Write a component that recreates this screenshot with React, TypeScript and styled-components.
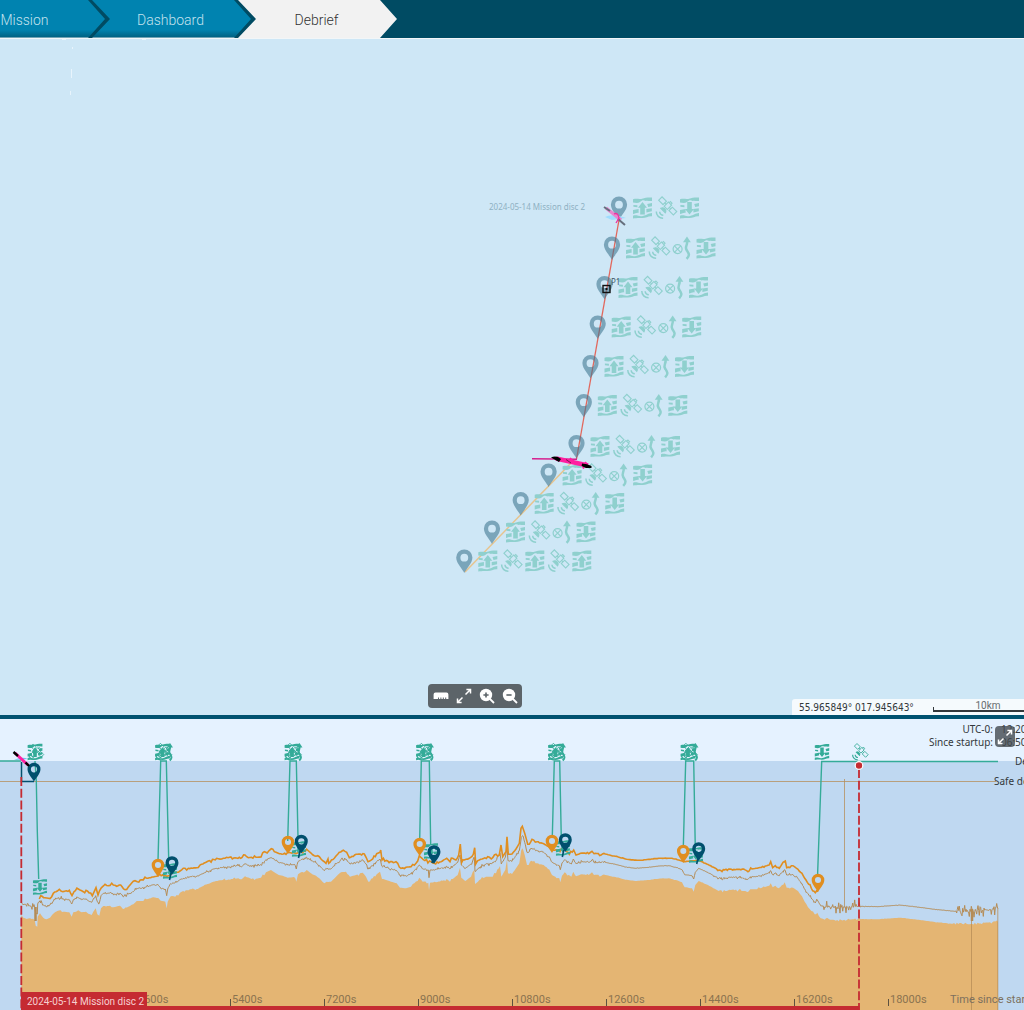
import React from "react";
import styled, { createGlobalStyle } from "styled-components";

const color = {
  navy: "#004b63",
  blue: "#0083b0",
  map: "#cee7f6",
  sky: "#e5f2ff",
  water: "#bfd8f1",
  sand: "#e4b573",
  sandLine: "#b58c56",
  orange: "#e08e20",
  green: "#34ab98",
  mint: "#8fd0ce",
  red: "#c52b32",
  magenta: "#ff1fa0",
};

const uiFont = `Roboto, "Liberation Sans", sans-serif`;
const dataFont = `"Noto Sans", "DejaVu Sans", sans-serif`;

const GlobalStyle = createGlobalStyle`
  *, *::before, *::after { box-sizing: border-box; }
  body { margin: 0; background: ${color.water}; font-family: ${uiFont}; }
`;

const Page = styled.div`
  display: flex;
  flex-direction: column;
  min-height: 100vh;
  overflow: hidden;
`;

const Header = styled.header`
  background: ${color.navy};
  border-bottom: 1px solid #f2f6f8;
`;

const Tabs = styled.nav`
  display: flex;
  height: 38px;
  margin-left: -54px;
`;

const Tab = styled.a<{ $active?: boolean }>`
  flex: none;
  display: flex;
  align-items: center;
  justify-content: center;
  width: 159px;
  margin-right: -13px;
  padding: 2px 2px 0 0;
  font-size: 14px;
  font-weight: 300;
  text-decoration: none;
  color: ${(p) => (p.$active ? "#333" : "#c3e2ee")};
  background: ${(p) =>
    p.$active ? "#f2f2f2" : `linear-gradient(${color.blue} 78%, #006384 97%, #6fa3b5 98%)`};
  clip-path: polygon(0 0, calc(100% - 17px) 0, 100% 50%, calc(100% - 17px) 100%, 0 100%, 18px 50%);
`;

const MapPane = styled.main`
  position: relative;
  background: ${color.map};
  border-bottom: 4px solid #005270;
`;

const Canvas = styled.svg<{ $height: number }>`
  display: block;
  width: 100%;
  height: ${(p) => p.$height}px;
`;

const CanvasText = styled.text<{ $size: number; $data?: boolean }>`
  font-family: ${(p) => (p.$data ? dataFont : uiFont)};
  font-size: ${(p) => p.$size}px;
`;

const Toolbar = styled.div`
  position: absolute;
  bottom: 7px;
  left: calc(50% - 84px);
  display: flex;
  height: 24px;
  padding: 0 1px;
  border-radius: 4px;
  background: #5c6469;
`;

const ToolButton = styled.button`
  display: grid;
  place-items: center;
  width: 23px;
  height: 24px;
  padding: 0;
  border: 0;
  background: none;
  color: #fff;
`;

const PositionBar = styled.div`
  position: absolute;
  right: 0;
  bottom: 0;
  display: flex;
  gap: 15px;
  width: 232px;
  height: 16px;
  padding-left: 7px;
  overflow: hidden;
  border-radius: 3px 0 0 0;
  background: #f5fafd;
  color: #33383b;
  font: 11px/17px ${dataFont};
  white-space: nowrap;
`;

const Coordinates = styled.span`
  flex: none;
  width: 119px;
  font: 10px/17px "DejaVu Sans Condensed", "DejaVu Sans", sans-serif;
`;

const Scale = styled.span`
  flex: none;
  position: relative;
  width: 110px;
  height: 13px;
  border-bottom: 2px solid #33383b;
  color: #666c70;
  font: 10px/14px ${uiFont};
  text-align: center;

  &::before {
    content: "";
    position: absolute;
    left: 0;
    bottom: 0;
    width: 1px;
    height: 3px;
    background: #33383b;
  }
`;

const ProfilePane = styled.section`
  position: relative;
  flex: 1;
  overflow: hidden;
  background: ${color.water};
`;

const Readout = styled.dl`
  position: absolute;
  top: 4px;
  left: calc(100% - 111px);
  display: grid;
  grid-template-columns: 80px 40px;
  column-gap: 8px;
  margin: 0;
  color: #33383b;
  font: 10px/13px ${dataFont};
  white-space: nowrap;
`;

const Term = styled.dt`
  text-align: right;
`;

const Value = styled.dd`
  margin: 0;
`;

const LineLabel = styled.span<{ $top: number; $width: number }>`
  position: absolute;
  top: ${(p) => p.$top}px;
  left: calc(100% - ${(p) => p.$width}px);
  color: #33383b;
  font: 10px/14px ${dataFont};
  white-space: nowrap;
`;

const ExpandButton = styled.button`
  position: absolute;
  top: 7px;
  right: 9px;
  display: grid;
  place-items: center;
  width: 20px;
  height: 21px;
  padding: 0;
  border: 0;
  border-radius: 4px;
  background: rgba(64, 70, 76, 0.78);
  color: #fff;
`;

/* ---------- glyphs ---------- */

type GlyphName = "up" | "down" | "sat" | "drift";

const Disc = ({ down }: { down?: boolean }) => (
  <g fill="currentColor">
    <path d="M0 1.8C4 .6 6 2.2 10 1S16 .2 19 0V3.4C16 3.8 14.4 2.8 12.6 3.4 10.4 2.4 9 2.6 7 4.6 5 6 2 5.4 0 5Z" />
    <path d="M.4 7.4 4.4 7.8V9.8L.4 9.2Z M0 12.6 5.6 11.6V15.4C4 14.8 2 16.4 0 16.4Z" />
    <path d="M14.2 6.4 19 5.4V8.8L15.2 9.4Z M13.4 11.6 18.8 10.8V13.8L13.4 15Z" />
    <path d="M0 18.2C4 17 6 19.4 10 18.4S15 15.8 19 15.4V18.8C15 18.4 13 20.8 9 20.6S3 20.6 0 21Z" />
    <path
      d={
        down
          ? "M9.5 17 14 11.4H11.8V4.6H7.2V11.4H5Z"
          : "M9.5 4.6 14 10.2H11.8V17H7.2V10.2H5Z"
      }
    />
  </g>
);

const Satellite = () => (
  <g fill="none" stroke="currentColor" strokeWidth="1.1">
    <g transform="translate(11.2 8.4) rotate(45)">
      <rect x="-10.4" y="-2.4" width="6.2" height="4.8" />
      <rect x="4.2" y="-2.4" width="6.2" height="4.8" />
      <rect x="-2.2" y="-3.2" width="4.4" height="6" />
      <path d="M-4.2 0H-2.2M2.2 0H4.2M-1.2-3.2V-5H1.2V-3.2" />
      <path d="M-3.2 6.6A3.3 3.3 0 0 1 3.2 6.6Z" fill="currentColor" />
    </g>
    <path d="M3.2 14.2A3.6 3.6 0 0 0 6.8 17.8M-.2 14A6.6 6.6 0 0 0 6.6 20.8" strokeWidth="1.5" />
  </g>
);

const Drift = () => (
  <g fill="none" stroke="currentColor" strokeWidth="1.2">
    <circle cx="4.6" cy="11.6" r="4.5" />
    <path d="M1.4 8.4 7.8 14.8M7.8 8.4 1.4 14.8" />
    <path d="M14 3C15 8 11.4 9 13.6 12.5S17.4 17.5 13.6 21.4" strokeWidth="2.5" />
    <path d="M14-1 17.8 4.8H10Z" fill="currentColor" stroke="none" />
  </g>
);

const Glyph = ({ name, x, y, scale = 1 }: { name: GlyphName; x: number; y: number; scale?: number }) => (
  <g transform={`translate(${x} ${y}) scale(${scale}) translate(-9.5 -10.5)`}>
    {name === "sat" ? <Satellite /> : name === "drift" ? <Drift /> : <Disc down={name === "down"} />}
  </g>
);

/* Pin whose tip is at (x, y) */
const Pin = ({ x, y, fill, scale = 1 }: { x: number; y: number; fill: string; scale?: number }) => (
  <path
    transform={`translate(${x} ${y}) scale(${scale})`}
    fill={fill}
    fillRule="evenodd"
    d="M0 0C-1.4-3.4-8.1-9.6-8.1-15.4A8.1 8.1 0 0 1 8.1-15.4C8.1-9.6 1.4-3.4 0 0ZM0-11.4A3.9 3.9 0 1 0 0-19.2 3.9 3.9 0 0 0 0-11.4Z"
  />
);

const RulerIcon = () => (
  <svg width="16" height="10" viewBox="0 0 16 10" fill="currentColor">
    <path d="M2.5 1.5H13.5A2 2 0 0 1 15.4 3.5V8H13.2V6.4H12.2V8H10.8V6.4H9.8V8H8.4V6.4H7.4V8H6V6.4H5V8H.6V3.5A2 2 0 0 1 2.5 1.5Z" />
  </svg>
);

const ExpandIcon = () => (
  <svg width="16" height="16" viewBox="0 0 16 16" fill="none" stroke="currentColor" strokeWidth="1.5">
    <path d="M10.4 1.5H14.5V5.6M14.5 1.5 9.5 6.5M5.6 14.5H1.5V10.4M1.5 14.5 6.5 9.5" />
  </svg>
);

const ZoomIcon = ({ plus }: { plus?: boolean }) => (
  <svg width="16" height="16" viewBox="0 0 16 16">
    <circle cx="7" cy="7" r="6.2" fill="currentColor" />
    <path d="M11 11 15 15" stroke="currentColor" strokeWidth="1.8" />
    <path d={plus ? "M4.4 7H9.6M7 4.4V9.6" : "M4.4 7H9.6"} stroke="#5c6469" strokeWidth="1.6" />
  </svg>
);

/* ---------- map ---------- */

const fullStop: GlyphName[] = ["up", "sat", "drift", "down"];

const waypoints: { x: number; y: number; glyphs: GlyphName[] }[] = [
  { x: 619, y: 220, glyphs: ["up", "sat", "down"] },
  { x: 612, y: 260, glyphs: fullStop },
  { x: 604.5, y: 299.5, glyphs: fullStop },
  { x: 597.7, y: 339, glyphs: fullStop },
  { x: 590.5, y: 378.5, glyphs: fullStop },
  { x: 583.8, y: 417.5, glyphs: fullStop },
  { x: 576.5, y: 458.5, glyphs: fullStop },
  { x: 548.6, y: 487, glyphs: fullStop },
  { x: 520.7, y: 515.5, glyphs: fullStop },
  { x: 492, y: 544, glyphs: fullStop },
  { x: 464.3, y: 573, glyphs: ["up", "sat", "up", "sat", "up"] },
];

const MapDrawing = () => (
  <Canvas $height={676} role="img" aria-label="Mission track">
    <g transform="translate(0 -39)">
      <g fill="#e8f4fc">
        <path d="M62 39H66V40H62ZM142 39H146V40H142ZM72 47H73V49H72ZM71 69H72V78H71ZM70 91H71V95H70Z" />
      </g>
      <path d="M572 462 465 572" stroke="#e6c48e" strokeWidth="1.5" fill="none" />
      <path d="M619 220 576.5 459" stroke="#e2675c" strokeWidth="1.3" fill="none" />
      {waypoints.map((p) => (
        <g key={p.y} color={color.mint}>
          <Pin x={p.x} y={p.y} fill="rgba(62, 118, 143, 0.58)" />
          {p.glyphs.map((g, i) => (
            <Glyph key={i} name={g} x={p.x + 23.5 + i * 23.5} y={p.y - 12} />
          ))}
        </g>
      ))}
      <CanvasText $size={8} $data x={489} y={210} fill="#8fb1c3">
        2024-05-14 Mission disc 2
      </CanvasText>
      <g>
        <path d="M605 217Q612 213 626 218L612 220Z" fill="#9fdcff" />
        <path d="M606 208 621 220" stroke="#e987cf" strokeWidth="3.4" />
        <path d="M604 207 610 211M618 219 625 225" stroke="#666f7d" strokeWidth="2" />
        <path d="M614 214Q618 212 619 218L616 223" fill="none" stroke="#f0309f" strokeWidth="1.3" />
      </g>
      <rect x="603" y="285.5" width="7" height="7" fill="none" stroke="#111" strokeWidth="1.4" />
      <rect x="605.5" y="288" width="2" height="2" fill="#111" />
      <CanvasText $size={8} $data x={611} y={285} fill="#3f5663">
        P1
      </CanvasText>
      <path d="M532 458.7 577 459.3" stroke="#d6218f" strokeWidth="1.5" />
      <path d="M556 458.5 588 465.5" stroke={color.magenta} strokeWidth="4.6" />
      <path d="M586 462 583 468.5M570 458 574 463" stroke={color.magenta} strokeWidth="2" />
      <path d="M551 457.6Q556 455 561 459L559 462ZM582 463.4 587 464.2 591.5 466V468L586 468 581.6 466Z" fill="#000" />
      <path d="M566 459.5 571 463" stroke="#7a1a55" strokeWidth="1" />
    </g>
  </Canvas>
);

/* ---------- depth profile ---------- */

type Sample = [number, number];

/* Samples are stored at three per pixel */
const RES = 3;
const TOP = 16;

const seabed: Sample[] = [
  [64, 540], [70, 548], [80, 552], [90, 550], [104, 556], [107, 572], [112, 575], [113, 545], [120, 535],
  [130, 548], [140, 553], [150, 548], [158, 538], [165, 532], [172, 528], [182, 526], [190, 530], [208, 532],
  [215, 545], [220, 532], [228, 530], [235, 526], [245, 532], [258, 530], [265, 536], [275, 540], [280, 530],
  [287, 520], [292, 538], [298, 542], [303, 520], [310, 513], [330, 512], [345, 516], [360, 512], [372, 522],
  [385, 515], [400, 508], [410, 498], [425, 498], [440, 493], [460, 487], [475, 489], [482, 497], [496, 500],
  [500, 520], [503, 500], [512, 484], [530, 480], [545, 470], [570, 463], [590, 462], [610, 453], [640, 440],
  [660, 436], [690, 434], [715, 430], [725, 433], [735, 424], [750, 430], [768, 431], [783, 428], [798, 412],
  [813, 405], [823, 412], [836, 420], [848, 422], [863, 428], [878, 427], [886, 430], [889, 440], [894, 418],
  [903, 412], [920, 405], [933, 415], [948, 422], [958, 430], [973, 445], [980, 440], [993, 440], [1008, 425],
  [1023, 412], [1038, 410], [1050, 425], [1068, 420], [1088, 413], [1098, 425], [1105, 440], [1118, 430],
  [1130, 418], [1140, 410], [1146, 432], [1158, 435], [1173, 440], [1190, 445], [1200, 458], [1218, 460],
  [1233, 455], [1243, 445], [1258, 428], [1268, 440], [1285, 443], [1287, 466], [1290, 443], [1308, 442],
  [1328, 437], [1340, 432], [1350, 440], [1358, 432], [1373, 420], [1380, 398], [1384, 428], [1396, 438],
  [1413, 425], [1423, 405], [1425, 447], [1438, 435], [1458, 425], [1473, 425], [1488, 415], [1500, 393],
  [1504, 425], [1516, 405], [1521, 373], [1524, 415], [1536, 417], [1548, 400], [1558, 385], [1564, 345],
  [1568, 340], [1574, 360], [1581, 390], [1586, 390], [1594, 377], [1611, 385], [1631, 390], [1644, 402],
  [1656, 420], [1666, 425], [1678, 430], [1681, 442], [1686, 422], [1694, 412], [1706, 420], [1714, 425],
  [1720, 410], [1728, 424], [1746, 418], [1766, 420], [1776, 412], [1782, 420], [1816, 420], [1846, 426],
  [1876, 434], [1906, 438], [1946, 435], [1976, 431], [2006, 430], [2031, 436], [2046, 442], [2054, 457],
  [2076, 460], [2081, 470], [2086, 450], [2096, 438], [2116, 447], [2136, 457], [2156, 468], [2176, 468],
  [2196, 464], [2216, 465], [2244, 471], [2251, 463], [2271, 463], [2286, 458], [2304, 453], [2312, 445],
  [2318, 457], [2326, 452], [2336, 460], [2346, 450], [2354, 442], [2360, 458], [2379, 458], [2394, 468],
  [2414, 500], [2429, 522], [2444, 538], [2452, 533], [2462, 550], [2474, 554], [2524, 555], [2574, 552],
  [2634, 553], [2699, 548], [2744, 553], [2804, 561], [2854, 566], [2904, 568], [2954, 563], [2994, 560],
];

const safeDepth: Sample[] = [
  [118, 492], [122, 482], [135, 488], [145, 490], [155, 485], [160, 475], [172, 468], [178, 463], [188, 470],
  [208, 466], [216, 482], [222, 470], [235, 462], [250, 470], [258, 466], [272, 474], [277, 482], [288, 458],
  [294, 480], [303, 460], [315, 448], [325, 452], [335, 445], [350, 454], [362, 450], [375, 464], [390, 450],
  [405, 437], [412, 440], [425, 434], [440, 430], [460, 426], [475, 422], [505, 422], [520, 412], [535, 412],
  [550, 400], [565, 400], [590, 398], [600, 390], [625, 378], [650, 370], [665, 372], [680, 367], [722, 370],
  [735, 360], [745, 368], [768, 367], [783, 366], [793, 350], [806, 348], [814, 341], [823, 350], [838, 356],
  [858, 358], [863, 352], [888, 356], [920, 343], [928, 350], [943, 362], [953, 362], [963, 372], [978, 385],
  [984, 372], [986, 385], [1003, 370], [1018, 352], [1030, 346], [1040, 352], [1048, 368], [1068, 358],
  [1093, 357], [1104, 380], [1118, 372], [1130, 356], [1140, 352], [1142, 345], [1146, 375], [1163, 378],
  [1180, 383], [1188, 380], [1203, 400], [1218, 397], [1233, 395], [1248, 385], [1258, 362], [1270, 374],
  [1293, 380], [1303, 385], [1323, 380], [1340, 370], [1350, 380], [1358, 370], [1368, 375], [1376, 360],
  [1381, 327], [1385, 382], [1393, 375], [1408, 370], [1420, 358], [1424, 338], [1427, 387], [1438, 375],
  [1463, 365], [1474, 372], [1488, 358], [1498, 360], [1503, 330], [1508, 365], [1518, 350], [1521, 305],
  [1525, 358], [1536, 357], [1548, 342], [1558, 325], [1563, 280], [1567, 274], [1574, 295], [1583, 328],
  [1588, 328], [1596, 313], [1611, 320], [1631, 326], [1646, 335], [1656, 345], [1696, 345], [1708, 358],
  [1721, 345], [1728, 360], [1746, 354], [1766, 356], [1776, 349], [1782, 356], [1816, 357], [1846, 364],
  [1881, 373], [1916, 376], [1946, 373], [1976, 370], [2016, 370], [2036, 375], [2051, 380], [2096, 376],
  [2116, 385], [2136, 395], [2158, 405], [2186, 402], [2206, 404], [2231, 402], [2244, 410], [2256, 402],
  [2276, 398], [2304, 391], [2312, 380], [2318, 398], [2326, 392], [2338, 400], [2349, 382], [2356, 378],
  [2360, 398], [2379, 392], [2394, 403], [2414, 430], [2434, 460], [2446, 473], [2454, 470],
];

const noise = (n: number) => {
  const v = Math.sin(n * 12.9898) * 43758.5453;
  return (v - Math.floor(v)) * 2 - 1;
};

const ripple = (data: Sample[], amount: (x: number) => number, step = 4): Sample[] =>
  data.flatMap(([x, y], i) => {
    const next = data[i + 1];
    if (!next) return [[x, y] as Sample];
    const steps = Math.max(1, Math.floor((next[0] - x) / step));
    return Array.from({ length: steps }, (_, s): Sample => {
      const t = s / steps;
      const px = x + (next[0] - x) * t;
      const jitter = s ? noise(px) ** 3 * amount(px) : 0;
      return [px, y + (next[1] - y) * t + jitter];
    });
  });

const toPath = (data: Sample[], lift = 0) =>
  "M" + data.map(([x, y]) => `${(x / RES).toFixed(1)} ${((y - lift) / RES + TOP).toFixed(1)}`).join("L");

const calm = (x: number) => (x > 1816 && x < 2140) || (x > 2580 && x < 2860);
const bedPath = toPath(ripple(seabed, (x) => (calm(x) ? 1 : 5)));
const safePath = toPath(ripple(safeDepth, (x) => (calm(x) ? 1 : 6)));
const echoPath = toPath(
  ripple(
    seabed,
    (x) => {
      if ((x > 2460 && x < 2580) || x > 2866) return 20;
      if (x < 104) return 14;
      return calm(x) ? 1 : 5;
    },
    2
  ),
  38
);

const gliderPath =
  "M0 42H21M35 42 36.3 62 37.3 112 38.7 160M158 142 160.7 42H166.3L168.7 140" +
  "M287.7 122 290 42H296.3L298 118M419.7 120 421.3 42H429.3L430.7 126" +
  "M552.3 118 554.3 42H559.7L561.3 120M683.3 128 685.7 42H693.7L695.3 130M817.5 158 821.7 42.5H998";

const surfacings = [163.5, 293, 424.5, 556.5, 689];
const bottomDiscs: Sample[] = [[40, 168], [170, 152], [299, 130], [431, 132], [563, 129], [696, 136]];
const climbPins: Sample[] = [[158, 158], [288, 135], [419.7, 137], [552, 134], [683.3, 144], [818, 173]];
const divePins: Sample[] = [[34, 62.5], [172, 156], [301.3, 134.5], [434, 145], [565.3, 133], [698.7, 142]];
const diveTails: Sample[] = [[169.5, 161], [298.5, 139], [432, 144], [562.3, 138], [696.7, 145]];

const ticks = ["3600s", "5400s", "7200s", "9000s", "10800s", "12600s", "14400s", "16200s", "18000s"];

const ProfileDrawing = () => (
  <Canvas $height={291} role="img" aria-label="Depth profile over time">
    <rect width="100%" height="42" fill={color.sky} />
    <rect y="42" width="100%" height="249" fill={color.water} />
    <path d={`${bedPath}V291H21.3Z`} fill={color.sand} />
    <path d="M0 62.5H996M844.5 60V188M971.5 190V291M997.8 190V291" stroke={color.sandLine} strokeOpacity="0.75" fill="none" />
    <path d={echoPath} stroke={color.sandLine} strokeWidth="1" fill="none" />
    <path d="M35.5 188V202M972 190V202" stroke={color.sandLine} strokeWidth="2.5" />
    <path d={gliderPath} stroke={color.green} strokeWidth="1.4" fill="none" />
    <path d={safePath} stroke={color.orange} strokeWidth="1.6" fill="none" />

    {ticks.map((label, i) => (
      <g key={label}>
        <path d={`M${136.5 + i * 94} 280V287`} stroke="#5c5140" />
        <CanvasText $size={11} x={138 + i * 94} y={284} fill="#8a7350">
          {label}
        </CanvasText>
      </g>
    ))}
    <CanvasText $size={11} x={950} y={284} fill="#7c705e">
      Time since start
    </CanvasText>

    <g color={color.green}>
      <Glyph name="up" x={35} y={33} scale={0.78} />
      <Glyph name="sat" x={36} y={33} scale={0.72} />
      {surfacings.map((x) => (
        <g key={x}>
          <Glyph name="up" x={x - 1} y={33} scale={0.78} />
          <Glyph name="sat" x={x} y={33} scale={0.78} />
          <Glyph name="drift" x={x + 3} y={33} scale={0.78} />
        </g>
      ))}
      <Glyph name="down" x={822} y={33} scale={0.76} />
      <Glyph name="sat" x={860} y={33} scale={0.76} />
      {bottomDiscs.map(([x, y]) => (
        <Glyph key={x} name="down" x={x} y={y} scale={0.74} />
      ))}
    </g>

    <path d="M21.5 43V62.5H34" stroke="#004f6d" strokeWidth="1.5" fill="none" />
    {diveTails.map(([x, y]) => (
      <path key={x} d={`M${x} ${y}l1.5-7`} stroke="#004f6d" strokeWidth="1.6" />
    ))}
    {climbPins.map(([x, y]) => (
      <Pin key={x} x={x} y={y} fill={color.orange} scale={0.78} />
    ))}
    {divePins.map(([x, y]) => (
      <Pin key={x} x={x} y={y} fill="#004f6d" scale={0.8} />
    ))}

    <path d="M21.3 58V291M859 50V291" stroke={color.red} strokeWidth="1.8" strokeDasharray="9 2.7" fill="none" />
    <path d="M21 287H859.5V291H21Z" fill={color.red} />
    <circle cx="859" cy="46.5" r="3.8" fill={color.red} stroke="#fff" strokeWidth="1.2" />

    <path d="M14 41Q22 37 28 40Z" fill="#6cc0f5" />
    <path d="M15 34 28 46" stroke={color.magenta} strokeWidth="3" />
    <path d="M13.5 33 18 37M25.5 43.5 29 47" stroke="#000" strokeWidth="2.4" />

    <rect x="21" y="273" width="126" height="18" fill={color.red} />
    <CanvasText $size={10} x={27} y={286} fill="#f6cfd0">
      2024-05-14 Mission disc 2
    </CanvasText>
  </Canvas>
);

export default function App() {
  return (
    <Page>
      <GlobalStyle />
      <Header>
        <Tabs aria-label="Sections">
          <Tab href="#mission">Mission</Tab>
          <Tab href="#dashboard">Dashboard</Tab>
          <Tab href="#debrief" $active aria-current="page">
            Debrief
          </Tab>
        </Tabs>
      </Header>
      <MapPane>
        <MapDrawing />
        <Toolbar role="toolbar" aria-label="Map tools">
          <ToolButton aria-label="Measure">
            <RulerIcon />
          </ToolButton>
          <ToolButton aria-label="Fit to screen">
            <ExpandIcon />
          </ToolButton>
          <ToolButton aria-label="Zoom in">
            <ZoomIcon plus />
          </ToolButton>
          <ToolButton aria-label="Zoom out">
            <ZoomIcon />
          </ToolButton>
        </Toolbar>
        <PositionBar>
          <Coordinates>55.965849° 017.945643°</Coordinates>
          <Scale>10km</Scale>
        </PositionBar>
      </MapPane>
      <ProfilePane>
        <ProfileDrawing />
        <Readout>
          <Term>UTC-0:</Term>
          <Value>12:20</Value>
          <Term>Since startup:</Term>
          <Value>06:50</Value>
        </Readout>
        <LineLabel $top={35} $width={9}>
          Depth
        </LineLabel>
        <LineLabel $top={55} $width={30}>
          Safe depth
        </LineLabel>
        <ExpandButton aria-label="Expand profile">
          <ExpandIcon />
        </ExpandButton>
      </ProfilePane>
    </Page>
  );
}
